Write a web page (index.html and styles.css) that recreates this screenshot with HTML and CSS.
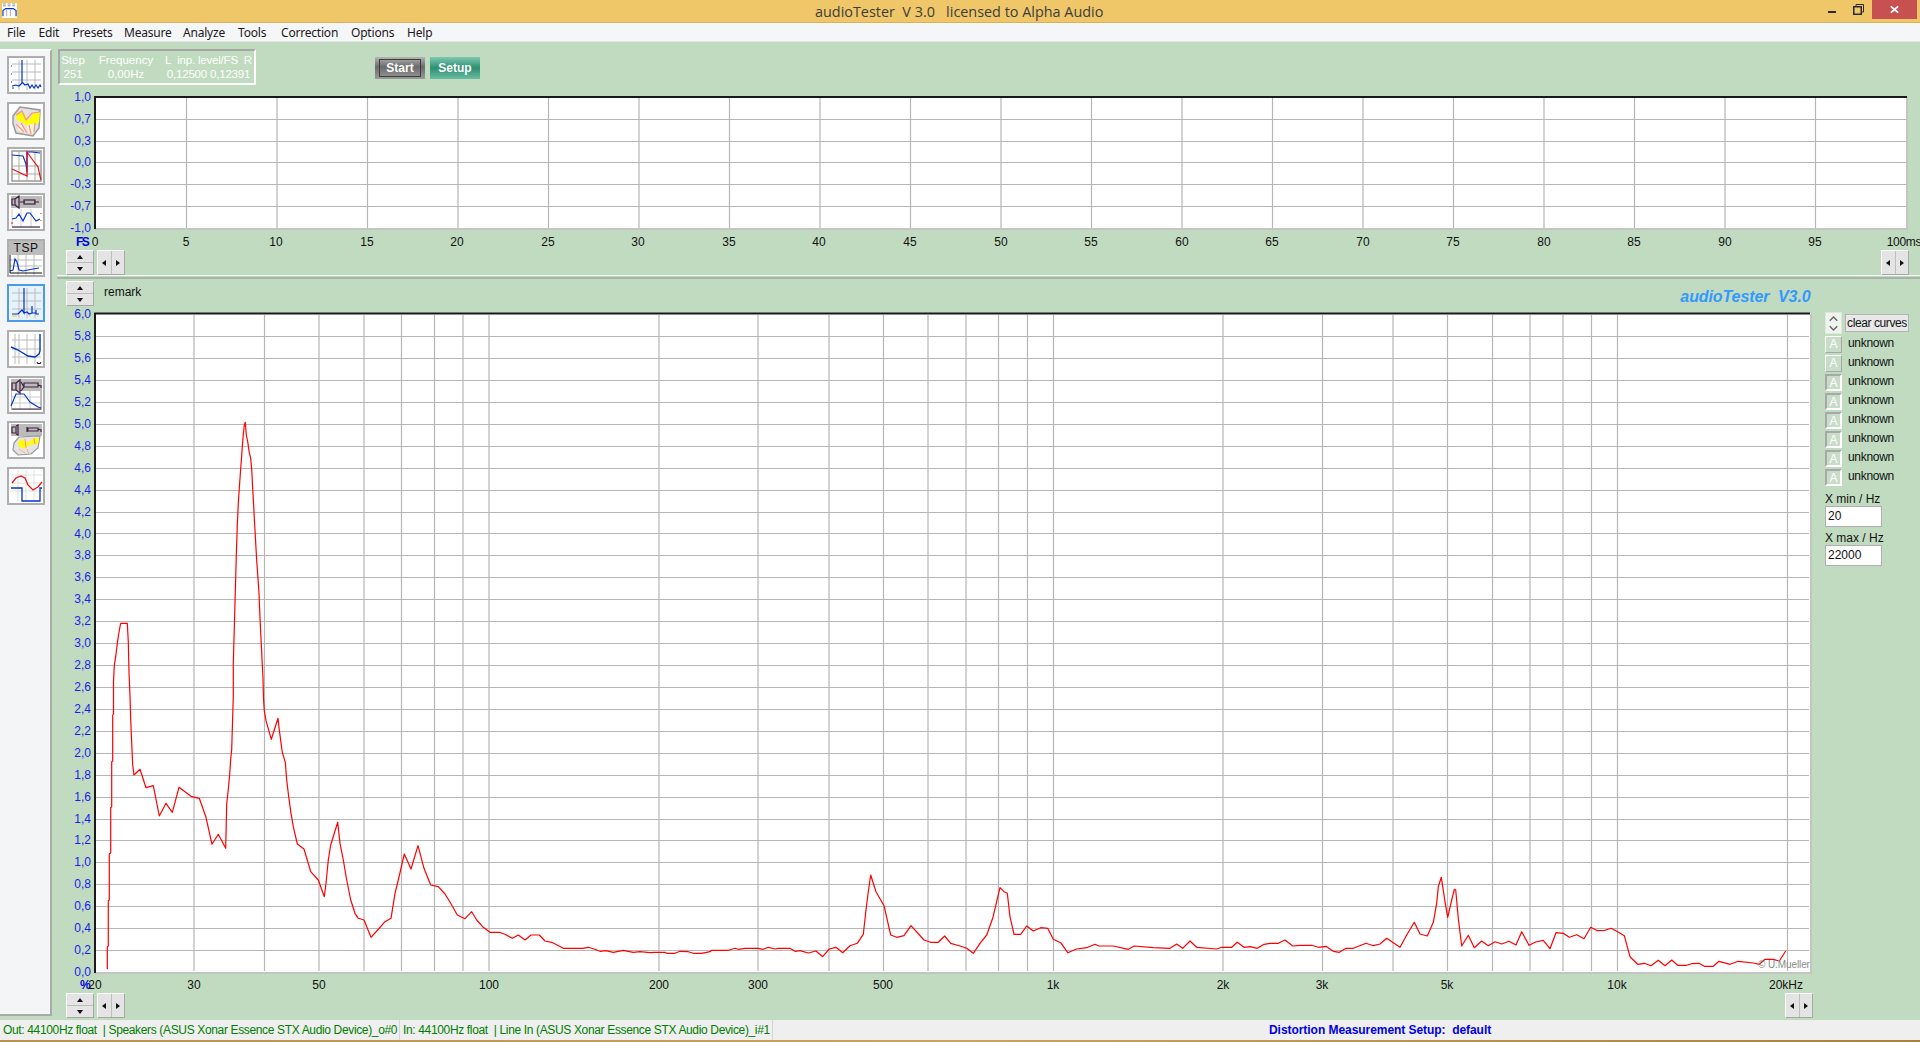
FILE: index.html
```html
<!DOCTYPE html>
<html lang="en">
<head>
<meta charset="utf-8">
<title>audioTester V 3.0</title>
<link rel="stylesheet" href="styles.css">
</head>
<body>
<div class="app">
  <header class="titlebar">
    <svg class="app-icon" viewBox="0 0 16 16"><rect width="16" height="16" fill="#fff"/><path d="M1 1h3M6 1h3M11 1h3M1 3h3M6 3h3M11 3h3" stroke="#889" stroke-width="1"/><path d="M1 14V8l3-2h8l3 2v6" fill="none" stroke="#03c" stroke-width="1.2"/><path d="M5 7v7M9 7v7" stroke="#aaa"/></svg>
    <div class="title">audioTester&nbsp; V 3.0 &nbsp; licensed to Alpha Audio</div>
    <div class="winctl">
      <svg class="ctl-min" viewBox="0 0 10 4"><rect y="1" width="8" height="2" fill="#2b2b2b"/></svg>
      <svg class="ctl-restore" viewBox="0 0 11 11"><path d="M3 2.500V.500H10.500V8H8.500" fill="none" stroke="#2b2b2b"/><rect x=".75" y="2.750" width="7.500" height="7.500" fill="none" stroke="#2b2b2b" stroke-width="1.500"/></svg>
      <div class="ctl-close"><svg viewBox="0 0 10 10"><path d="M1 1.500L9 8.500M9 1.500L1 8.500" stroke="#fff" stroke-width="2"/></svg></div>
    </div>
  </header>
  <nav class="menubar">
    <span class="m-file">File</span><span class="m-edit">Edit</span><span class="m-presets">Presets</span><span class="m-measure">Measure</span><span class="m-analyze">Analyze</span><span class="m-tools">Tools</span><span class="m-correction">Correction</span><span class="m-options">Options</span><span class="m-help">Help</span>
  </nav>
  <main class="workspace">
    <aside class="toolbar">
      <div class="tool"><svg viewBox="0 0 34 34"><path d="M3 6H32M3 14H32M3 22H32M10 2V32M18 2V32M26 2V32" stroke="#bbb"/><path d="M2 8h1M2 16h1M2 24h1M3 30h2" stroke="#03c"/><path d="M3 28l4-1 3 1 3-3V2v22l3 3 3-1 2 4 2-3 2 3 2-3 2 3 2-3 1 2" fill="none" stroke="#03c" stroke-width="1.200"/></svg></div>
      <div class="tool"><svg viewBox="0 0 34 34"><path d="M4 12L11 3l20 3-1 18-6 8-17-3-3-9z" fill="#e2e2e2" stroke="#999" stroke-width="1.500"/><path d="M7 11l6-4 4 5 3 4 4-7 7-1-1 11-7 2-4 1-5-3-6-3z" fill="#ff0"/><path d="M7 20l6 1 4 8-7-2zM18 21l7-2-1 11-5-1z" fill="#fff8c0"/><path d="M7 11l6-4 4 9M17 16l6-7 8-1M7 20l8 8M12 19l6 10M20 21l2 9M26 19l-1 9" fill="none" stroke="#f8a" stroke-width="1.200"/></svg></div>
      <div class="tool"><svg viewBox="0 0 34 34"><rect x="3" y="2" width="29" height="30" fill="none" stroke="#999" stroke-width="1.500"/><path d="M3 17H32M3 25H32M10 2V32M18 2V32M26 2V32" stroke="#aaa"/><path d="M3 6l11 1 3 8 1 8V3l5 0 8 1" fill="none" stroke="#03c" stroke-width="1.200"/><path d="M3 20l15 7V3l5 7 6 8 2 9 1 4" fill="none" stroke="#e11" stroke-width="1.200"/></svg></div>
      <div class="tool"><svg viewBox="0 0 34 34"><rect x="2" y="1" width="31" height="12" fill="#bbb"/><path d="M3 4h3v6H3zM6 4l4-3v12l-4-3M11 7h5M25 7h5" fill="none" stroke="#402040" stroke-width="1.200"/><rect x="15" y="5" width="11" height="4" fill="none" stroke="#402040" stroke-width="1.200"/><path d="M3 14V32M12 14V32M22 14V32" stroke="#ccc"/><path d="M3 24l4-1 3-4 4 7 4-8 3 0 6 8 4-2" fill="none" stroke="#03c" stroke-width="1.200"/><path d="M3 32H31" stroke="#402040" stroke-width="1.200"/><path d="M32 18v1M32 25v1M3 27v2" stroke="#e11"/></svg></div>
      <div class="tool tool-tsp"><span class="tsp-label">TSP</span><svg class="tsp-plot" viewBox="0 0 34 20"><path d="M1 5H33M1 11H33M9 0V20M17 0V20M25 0V20" stroke="#bbb"/><path d="M1 16l3-1 2-11 2 3 2 8 4 1 5-1 5-1 6-1" fill="none" stroke="#03c" stroke-width="1.200"/><path d="M1 0V18H33" fill="none" stroke="#111"/></svg></div>
      <div class="tool tool-active"><svg viewBox="0 0 34 34"><path d="M3 7H32M3 15H32M3 23H32M10 2V32M18 2V32M26 2V32" stroke="#bbb"/><path d="M3 28h6l4-4 2 3V2v25l3-1 2 2 3-1V20v7h4V24v4h3" fill="none" stroke="#03c" stroke-width="1.200"/><path d="M3 30h5M20 30h1M28 30h1" stroke="#fc0"/></svg></div>
      <div class="tool"><svg viewBox="0 0 34 34"><path d="M3 8H32M3 17H32M3 25H32M6 2V32M10 2V32M18 2V32M26 2V32" stroke="#bbb"/><path d="M2 15l7 3 10 6 7 1 4-3 1-3 0-17" fill="none" stroke="#03c" stroke-width="1.400"/><path d="M28 30l1 2 1-1 1 1 1-2" fill="none" stroke="#111"/></svg></div>
      <div class="tool"><svg viewBox="0 0 34 34"><rect x="2" y="1" width="31" height="31" fill="#bbb"/><rect x="3" y="13" width="28" height="18" fill="#fff"/><path d="M3 19H31M3 25H31M11 13V31M21 13V31" stroke="#ccc"/><path d="M3 5h4v7H3zM7 5l4-3v13l-4-3M12 4l3 5-3 4M15 5h14v4H15zM29 7l3 1v2" fill="none" stroke="#402040" stroke-width="1.200"/><path d="M2 28l5-12h8l6 8 8 5 3 1" fill="none" stroke="#03c" stroke-width="1.200"/><path d="M3 31H32" stroke="#402040"/></svg></div>
      <div class="tool"><svg viewBox="0 0 34 34"><rect x="2" y="1" width="31" height="12" fill="#bbb"/><path d="M3 4h4v6H3zM7 3l2-1v10l-2-1M19 5h10v3H19zM29 6l3 1v2M18 4v5" fill="none" stroke="#402040" stroke-width="1.200"/><path d="M5 20l5-6 21-1-2 12-7 6-13 1-5-5z" fill="#e4e4e4" stroke="#999" stroke-width="1.200"/><path d="M9 19l5-3 5 4 6-5 5 0-1 6-8 1-7 4-4-3z" fill="#ff0"/><path d="M16 16l1 9M25 15l1 6" stroke="#f8a"/><path d="M10 26l6 4M18 26l2 5" stroke="#fa9"/></svg></div>
      <div class="tool"><svg viewBox="0 0 34 34"><path d="M2 6H33M2 14H33M2 22H33M9 1V32M17 1V32M25 1V32" stroke="#e0e0e0"/><path d="M3 14l4-5 5-2 4 2 3 7 5 5 5-3 4-5" fill="none" stroke="#e11" stroke-width="1.300"/><path d="M2 19h11v13h18V19h2" fill="none" stroke="#03c" stroke-width="1.300"/></svg></div>
    </aside>
    <section class="content">
      <div class="top-head">
        <div class="levels">
          <div class="lv-col lv-step"><span>Step</span><span>251</span></div>
          <div class="lv-col lv-freq"><span>Frequency</span><span>0,00Hz</span></div>
          <div class="lv-col lv-level"><span>L&nbsp; inp. level/FS&nbsp; R</span><span>0,12500 0,12391</span></div>
        </div>
        <button class="cmd cmd-start"><span>Start</span></button>
        <button class="cmd cmd-setup"><span>Setup</span></button>
      </div>
      <svg class="chart-top" viewBox="52 90 1868 160">
        <rect x="95" y="97" width="1812" height="132" fill="#fff"/>
        <path class="grid" d="M96 119.500H1906M96 141.500H1906M96 162.500H1906M96 184.500H1906M96 206.500H1906M186.500 98V228M277 98V228M367.500 98V228M458 98V228M548.500 98V228M639 98V228M729.500 98V228M820 98V228M910.500 98V228M1001 98V228M1091.500 98V228M1182 98V228M1272.500 98V228M1363 98V228M1453.500 98V228M1544 98V228M1634.500 98V228M1725 98V228M1815.500 98V228"/>
        <path class="frame-light" d="M95 229H1907V97"/>
        <path class="frame-dark" d="M95 229V97H1907"/>
        <g class="ylab">
          <text x="91" y="101">1,0</text><text x="91" y="123">0,7</text><text x="91" y="145">0,3</text><text x="91" y="166">0,0</text><text x="91" y="188">-0,3</text><text x="91" y="210">-0,7</text><text x="91" y="232">-1,0</text>
        </g>
        <text class="unit" x="76" y="246">FS</text>
        <g class="xlab">
          <text x="95" y="246">0</text><text x="186" y="246">5</text><text x="276" y="246">10</text><text x="367" y="246">15</text><text x="457" y="246">20</text><text x="548" y="246">25</text><text x="638" y="246">30</text><text x="729" y="246">35</text><text x="819" y="246">40</text><text x="910" y="246">45</text><text x="1001" y="246">50</text><text x="1091" y="246">55</text><text x="1182" y="246">60</text><text x="1272" y="246">65</text><text x="1363" y="246">70</text><text x="1453" y="246">75</text><text x="1544" y="246">80</text><text x="1634" y="246">85</text><text x="1725" y="246">90</text><text x="1815" y="246">95</text><text class="xlab-end" x="1904" y="246">100ms</text>
        </g>
      </svg>
      <div class="top-controls">
        <div class="spin spin-v"><b class="tri-up"></b><b class="tri-down"></b></div>
        <div class="spin spin-h"><b class="tri-left"></b><b class="tri-right"></b></div>
        <div class="spin spin-h spin-end"><b class="tri-left"></b><b class="tri-right"></b></div>
      </div>
      <div class="divider"></div>
      <div class="remark-row">
        <div class="spin spin-v"><b class="tri-up"></b><b class="tri-down"></b></div>
        <span class="remark">remark</span>
        <span class="brand">audioTester&nbsp; V3.0</span>
      </div>
      <div class="main-row">
        <svg class="chart-main" viewBox="52 307 1772 685">
          <rect x="95" y="313" width="1716" height="660" fill="#fff"/>
          <path class="grid" d="M96 336.500H1809M96 358.500H1809M96 380.500H1809M96 402.500H1809M96 424.500H1809M96 446.500H1809M96 468.500H1809M96 490.500H1809M96 512.500H1809M96 533.500H1809M96 555.500H1809M96 577.500H1809M96 599.500H1809M96 621.500H1809M96 643.500H1809M96 665.500H1809M96 687.500H1809M96 709.500H1809M96 731.500H1809M96 753.500H1809M96 775.500H1809M96 797.500H1809M96 819.500H1809M96 840.500H1809M96 862.500H1809M96 884.500H1809M96 906.500H1809M96 928.500H1809M96 950.500H1809"/>
          <path class="grid" d="M194 315V971M264.500 315V971M319 315V971M364 315V971M401.500 315V971M434.500 315V971M463 315V971M489 315V971M659 315V971M758 315V971M829 315V971M883.500 315V971M928 315V971M966 315V971M998.500 315V971M1027.500 315V971M1053.500 315V971M1223 315V971M1322.500 315V971M1393 315V971M1447.500 315V971M1492.500 315V971M1530 315V971M1563 315V971M1591.500 315V971M1617.500 315V971M1787.500 315V971"/>
          <path class="frame-light" d="M95 973H1811V314"/>
          <path class="frame-dark" d="M95 973V313.500H1810"/>
          <polyline class="curve" points="107.300,969.300 107.300,946.700 108.300,946 108.300,900.700 109.300,900 109.300,854 110.700,853 110.700,807.700 111.700,807 111.700,761.700 112.700,761 112.700,715 113.500,714 113.500,681.700 114.300,665.700 115.700,656.700 116.700,648.300 117.700,640.700 118.700,634 120,626.700 120.700,623.300 127.300,623.300 128.300,642 129,671.700 130,695.700 130.700,719 131.700,742.700 132.700,765 134,775 140,769.300 146,787.700 153.300,785.700 159.300,816 166,803.300 172.300,812.300 179,787.300 191.700,796.700 199.300,798.300 206,817.300 212,844.300 218.300,834.300 225.700,848.300 226.700,804 228.300,789.300 229.700,774.300 230.700,759.300 231.700,749.300 232.700,716 233.300,696.700 233.300,663.300 234.300,628.300 235.300,591.700 236.300,555.700 237.300,525 238.300,503.300 239.300,488.300 240.300,474 241.300,461 242.300,446.700 243.300,434.300 244.300,425 245.300,422.300 246.300,435 247.700,441.700 249.300,452.700 250.700,458.300 251.700,469.300 252.700,488.300 253.700,506.700 254.700,525 255.700,542.700 256.700,560.700 257.700,574.300 259,593.300 260,618.300 261,638.300 262,658.700 263,678.700 263.500,698.500 264.300,710.700 266,720.700 271.300,739.300 278,718.300 279.300,730 282.300,752.300 285.300,762.300 286.700,780 288.700,796.700 291,813.300 293.300,826.700 297.300,844 304,849 310.700,871.700 318.300,880 324.300,896.700 326,883.300 328.300,860 330.700,845 337.700,822.300 340,843.300 343.300,860 346.700,880 350.700,900 355,913.300 358.300,918.300 364,920 371,937.300 377.700,930 385,921.700 391,918.300 395,893.300 398.300,880 404.300,854 411,869 418,845.700 424,868.300 430.700,885 438.300,886.700 445,894 450.700,903.300 457.300,915 465,918.700 471.700,911.700 476.700,920 483.300,927.300 490,932.300 499.300,932.300 505,934.300 512.300,938.300 518.300,935 525,940 531,935 539.300,935 545,941 551.700,942.300 563.300,948.300 582.700,948.300 588.300,947.300 594,949 600,951.300 605.700,950.700 613.300,952.300 623.300,950.300 633.300,952.300 640,951.700 650,952.700 655,952.300 665,952.300 666.700,953.300 675,953.300 680,951.300 688.300,951.700 693.300,953.300 701.700,953.300 710,951.700 711.700,950.300 728.300,950.300 735,948.300 738.300,949.300 745,948.300 758.300,948.300 763.300,949.300 768.300,947.300 775,949 778.300,948.300 790,948.300 795,951.300 800,950.700 808.300,953 816,951 822.700,956.700 829.300,949 836,947.300 842.700,952.700 850,945.700 857.300,943.300 863.300,934.300 866,910 868.300,891.700 870.700,875 876,891.700 884,905.700 890.700,935 896.700,937.300 904,935.700 911,925.700 924,940 930.700,942.300 938.300,942.300 944.700,936 950.700,943.300 960,946 966.700,948.300 973.300,953.300 980,943.300 986.700,935 992.700,918.300 996.700,901.700 1000,887.700 1004,891.700 1007.300,893.300 1010,916.700 1014,934.300 1020.700,934.300 1026.700,926 1033.300,931 1040.700,927.700 1047.700,928.300 1053.300,939.300 1060.700,942.700 1067.700,952.700 1076.700,949 1086.700,947.700 1095,944.300 1099,946 1113.300,946 1128.300,949.300 1134.300,946 1153.300,947.700 1170,948.300 1176.700,944 1182.700,948.300 1190,941 1196.700,947.300 1216.700,949 1221.700,947.300 1231.700,947.300 1237.300,942.300 1244,947.300 1250,946.700 1257.300,948.300 1264,944.300 1270,943.300 1278.300,943.300 1285,940 1292.700,946 1300,945.300 1311.700,945.300 1318.300,947.300 1326,946.300 1333.300,951.300 1339.300,952.300 1346,948.300 1353.300,948.300 1366,943.300 1373.300,945.700 1380,944 1386.700,938.300 1400,947.300 1406.700,935 1414.300,922.300 1420,934 1427.300,936 1433.300,922.300 1436.700,903.300 1438.300,886.700 1441.300,877.300 1445,901.700 1447.700,917.300 1451.700,900 1454.300,889.300 1455.700,890 1458.300,918.300 1461.700,946 1468.300,935.300 1474.300,947.700 1481.700,941 1488.300,945.700 1495,941.700 1501.700,944 1509,941.300 1516,945 1521.700,931.700 1529,945.300 1535.700,942 1543.300,940.300 1550,948.700 1556,932.700 1563.300,933.300 1569.300,937.300 1576.700,934.700 1584,938.700 1590.700,927.300 1597.300,930.700 1605,930.300 1611,928.300 1617.700,931.700 1624.300,935.700 1630,956.700 1637.700,964.300 1644.300,963.300 1651,965.700 1658.300,960.300 1665,965.700 1671.700,960 1677.700,965.300 1686.700,965.300 1691.700,963.700 1699,963.300 1704.300,966.300 1713.300,966.300 1719,961.300 1730,964.300 1738.300,961.300 1753.300,963 1759.300,964.300 1765,959.300 1773.300,959.300 1779.300,961 1785.700,951"/>
          <text class="copyright" x="1758" y="968">© U.Mueller</text>
          <g class="ylab">
            <text x="91" y="318">6,0</text><text x="91" y="340">5,8</text><text x="91" y="362">5,6</text><text x="91" y="384">5,4</text><text x="91" y="406">5,2</text><text x="91" y="428">5,0</text><text x="91" y="450">4,8</text><text x="91" y="472">4,6</text><text x="91" y="494">4,4</text><text x="91" y="516">4,2</text><text x="91" y="538">4,0</text><text x="91" y="559">3,8</text><text x="91" y="581">3,6</text><text x="91" y="603">3,4</text><text x="91" y="625">3,2</text><text x="91" y="647">3,0</text><text x="91" y="669">2,8</text><text x="91" y="691">2,6</text><text x="91" y="713">2,4</text><text x="91" y="735">2,2</text><text x="91" y="757">2,0</text><text x="91" y="779">1,8</text><text x="91" y="801">1,6</text><text x="91" y="823">1,4</text><text x="91" y="844">1,2</text><text x="91" y="866">1,0</text><text x="91" y="888">0,8</text><text x="91" y="910">0,6</text><text x="91" y="932">0,4</text><text x="91" y="954">0,2</text><text x="91" y="976">0,0</text>
          </g>
          <text class="unit" x="80" y="989">%</text>
          <g class="xlab">
            <text x="95" y="989">20</text><text x="194" y="989">30</text><text x="319" y="989">50</text><text x="489" y="989">100</text><text x="659" y="989">200</text><text x="758" y="989">300</text><text x="883" y="989">500</text><text x="1053" y="989">1k</text><text x="1223" y="989">2k</text><text x="1322" y="989">3k</text><text x="1447" y="989">5k</text><text x="1617" y="989">10k</text><text x="1786" y="989">20kHz</text>
          </g>
        </svg>
        <aside class="sidepanel">
          <div class="clear-row">
            <div class="updown"><svg viewBox="0 0 16 21"><path d="M4 8l4-4 4 4M4 14l4 4 4-4" fill="none" stroke="#666" stroke-width="1.500"/></svg></div>
            <button class="clear-btn">clear curves</button>
          </div>
          <ul class="curve-list">
            <li><span class="chk chk-up">A</span>unknown</li>
            <li><span class="chk chk-up">A</span>unknown</li>
            <li><span class="chk">A</span>unknown</li>
            <li><span class="chk">A</span>unknown</li>
            <li><span class="chk">A</span>unknown</li>
            <li><span class="chk">A</span>unknown</li>
            <li><span class="chk">A</span>unknown</li>
            <li><span class="chk">A</span>unknown</li>
          </ul>
          <label class="field-label">X min / Hz</label>
          <div class="field">20</div>
          <label class="field-label">X max / Hz</label>
          <div class="field">22000</div>
        </aside>
      </div>
      <div class="bottom-controls">
        <div class="spin spin-v"><b class="tri-up"></b><b class="tri-down"></b></div>
        <div class="spin spin-h"><b class="tri-left"></b><b class="tri-right"></b></div>
        <div class="spin spin-h spin-end"><b class="tri-left"></b><b class="tri-right"></b></div>
      </div>
    </section>
  </main>
  <footer class="statusbar">
    <span class="st st-out">Out: 44100Hz float&nbsp; | Speakers (ASUS Xonar Essence STX Audio Device)_o#0</span>
    <span class="st st-in">In: 44100Hz float&nbsp; | Line In (ASUS Xonar Essence STX Audio Device)_i#1</span>
    <span class="st st-setup">Distortion Measurement Setup:&nbsp; default</span>
  </footer>
  <div class="desktop-sliver"></div>
</div>
</body>
</html>
```

FILE: styles.css
```css
* { box-sizing: border-box; }
html, body { margin: 0; padding: 0; }
body { width: 1920px; height: 1042px; overflow: hidden; background: #c0dbc0; font-family: "Liberation Sans", Arial, sans-serif; font-size: 12px; color: #111; }
.app { display: flex; flex-direction: column; width: 1920px; height: 1042px; }

.titlebar { flex: none; height: 23px; background: #efc768; border-bottom: 1px solid #d8b25a; display: flex; align-items: flex-start; }
.app-icon { width: 15px; height: 15px; margin: 3px 0 0 2px; flex: none; }
.title { margin-left: 798px; width: 500px; font-family: "Open Sans", sans-serif; font-size: 14.400px; line-height: 23px; color: #3c3c3c; white-space: nowrap; }
.winctl { margin-left: auto; display: flex; align-items: flex-start; }
.ctl-min { width: 10px; height: 4px; margin: 10px 15px 0 0; }
.ctl-restore { width: 11px; height: 11px; margin: 4px 8px 0 0; }
.ctl-close { width: 45px; height: 19px; margin-right: 3px; background: #c75050; display: flex; align-items: center; justify-content: center; }
.ctl-close svg { width: 9px; height: 9px; }

.menubar { flex: none; height: 19px; background: #f5f6f8; border-bottom: 1px solid #e4e6e8; display: flex; align-items: center; font-family: "Noto Sans", sans-serif; font-size: 12px; letter-spacing: -.2px; color: #1a1a1a; padding-left: 7px; }
.menubar span { display: block; white-space: nowrap; }
.m-file { width: 31.500px; }
.m-edit { width: 34px; }
.m-presets { width: 51.500px; }
.m-measure { width: 59px; }
.m-analyze { width: 55px; }
.m-tools { width: 43px; }
.m-correction { width: 70px; }
.m-options { width: 56px; }

.workspace { flex: none; height: 978px; display: flex; background: #c0dbc0; }

.toolbar { flex: none; width: 52px; height: 967px; margin-top: 7px; background: #f4f5f7; border-right: 2px solid #a9aaa9; border-top: 2px solid #fff; border-bottom: 2px solid #a9aaa9; padding: 5px 0 0 7px; display: flex; flex-direction: column; gap: 7.670px; }
.tool { width: 38px; height: 38px; border: 2px solid #aeaeae; background: #fff; flex: none; display: flex; flex-direction: column; }
.tool svg { width: 34px; height: 34px; display: block; }
.tool-active { border-color: #4a9ae8; background: #e6f2fc; }
.tsp-label { display: block; height: 14px; background: #bdbdbd; text-align: center; font-size: 12px; line-height: 14px; color: #111; letter-spacing: .5px; }
.tool .tsp-plot { width: 34px; height: 20px; }

.content { flex: 1; min-width: 0; display: flex; flex-direction: column; }
.top-head { flex: none; height: 48px; padding: 7px 0 0 6px; display: flex; align-items: flex-start; }
.levels { width: 198px; height: 36px; border: 2px solid; border-color: #a6a6a6 #fff #fff #a6a6a6; display: flex; color: #fff; font-size: 11.500px; line-height: 14px; padding-top: 2px; }
.lv-col { display: flex; flex-direction: column; align-items: center; white-space: nowrap; }
.lv-step { width: 24px; padding-left: 2px; }
.lv-freq { width: 52px; margin-left: 16px; }
.lv-level { width: 85px; margin-left: 14px; letter-spacing: -.2px; }
.cmd { height: 22px; width: 50px; border: 0; padding: 2px 4px; font: bold 12px "Liberation Sans", sans-serif; color: #fff; margin-top: 8px; display: block; }
.cmd span { display: block; height: 18px; line-height: 16px; border: 1px solid transparent; }
.cmd-start { margin-left: 119px; background: linear-gradient(#b5b5b5, #6a6a6a 45%, #9a9a9a); }
.cmd-start span { border: 1px solid #3e3e3e; }
.cmd-setup { margin-left: 5px; background: linear-gradient(#7ccab0, #2e8e70 50%, #6bbda2); }

.chart-top { flex: none; display: block; width: 1868px; height: 160px; }
.grid { stroke: #b6b6b6; stroke-width: 1.200; fill: none; }
.frame-light { fill: none; stroke: #c4c4c4; stroke-width: 2; }
.frame-dark { fill: none; stroke: #1a1a1a; stroke-width: 2; }
.ylab text { text-anchor: end; font-size: 12px; fill: #1c1cf0; }
.xlab text { text-anchor: middle; font-size: 12px; fill: #111; }
.xlab .xlab-end { letter-spacing: -.3px; }
.unit { font-size: 12px; font-weight: bold; letter-spacing: -1.500px; fill: #0000e0; }
.curve { fill: none; stroke: #f00; stroke-width: 1.200; stroke-linejoin: round; }
.copyright { font-size: 10px; letter-spacing: -.1px; fill: #8a8a8a; }

.top-controls, .bottom-controls { flex: none; display: flex; align-items: flex-start; padding-left: 14px; gap: 3px; }
.top-controls { height: 25px; }
.spin-end { margin-left: auto; }
.top-controls .spin-end { margin-right: 11px; }
.bottom-controls { height: 28px; padding-top: 1px; }
.bottom-controls .spin-end { margin-right: 107px; }

.spin { display: flex; background: #bdbdbd; border: 1px solid; border-color: #fff #a8a8a8 #a8a8a8 #fff; flex: none; }
.spin b { display: flex; align-items: center; justify-content: center; background: #e4e4e4; }
.spin b::after { content: ""; display: block; width: 0; height: 0; border-style: solid; border-color: transparent; }
.spin-v { flex-direction: column; width: 28px; height: 25px; gap: 1px; }
.spin-v b { flex: 1; }
.spin-h { width: 28px; height: 25px; gap: 1px; }
.spin-h b { flex: 1; }
.tri-up::after { border-width: 0 3px 4px; border-bottom-color: #111 !important; }
.tri-down::after { border-width: 4px 3px 0; border-top-color: #111 !important; }
.tri-left::after { border-width: 3.500px 4px 3.500px 0; border-right-color: #111 !important; }
.tri-right::after { border-width: 3.500px 0 3.500px 4px; border-left-color: #111 !important; }

.divider { flex: none; height: 4px; border-top: 1px solid #f0f6f0; border-bottom: 2px solid #a9b3a9; margin-left: 5px; }
.remark-row { flex: none; height: 28px; display: flex; align-items: flex-start; padding: 2px 0 0 14px; }
.remark { margin: 4px 0 0 10px; font-size: 12px; }
.brand { margin: 7px 0 0 1539px; width: 140px; font-size: 16px; font-weight: bold; font-style: italic; letter-spacing: -.1px; color: #3399ff; white-space: nowrap; }

.main-row { flex: none; height: 685px; display: flex; }
.chart-main { flex: none; display: block; width: 1772px; height: 685px; }
.sidepanel { flex: none; width: 96px; padding: 5px 0 0 1px; font-size: 12px; }
.clear-row { display: flex; align-items: flex-start; height: 24px; }
.updown { width: 17px; height: 22px; background: #eef3ee; border: 1px solid #dfe8df; flex: none; }
.updown svg { display: block; width: 15px; height: 20px; }
.clear-btn { margin: 2px 0 0 3px; width: 64px; height: 18px; padding: 0; background: #e8e8e8; border: 1px solid #b4b4b4; font: 12px "Liberation Sans", sans-serif; letter-spacing: -.4px; color: #111; white-space: nowrap; }
.curve-list { list-style: none; margin: 0 0 2px; padding: 0; }
.curve-list li { display: flex; align-items: flex-start; height: 19px; line-height: 15px; white-space: nowrap; letter-spacing: -.3px; }
.chk { width: 17px; height: 17px; margin-right: 6px; flex: none; border: 2px solid; border-color: #a8a8a8 #fff #fff #a8a8a8; color: #fff; text-align: center; font-size: 12px; line-height: 14px; letter-spacing: 0; background: #c8dcc8; }
.chk-up { border: 1px solid; border-color: #fff #a8a8a8 #a8a8a8 #fff; line-height: 15px; }
.field-label { display: block; margin-top: 3px; height: 15px; line-height: 17px; }
.field { width: 57px; height: 21px; background: #fff; border: 1px solid #b0b0b0; padding-left: 2px; line-height: 19px; font-size: 12px; }

.statusbar { flex: none; height: 20px; background: #efefef; display: flex; align-items: center; font-size: 12px; white-space: nowrap; }
.st { display: block; line-height: 21px; letter-spacing: -.35px; }
.st-out { width: 400px; padding-left: 3px; color: #008000; border-right: 1px solid #d6d6d6; }
.st-in { width: 373px; padding-left: 3px; color: #008000; border-right: 1px solid #d6d6d6; }
.st-setup { margin-left: 496px; color: #0000e6; font-weight: bold; letter-spacing: -.05px; }
.desktop-sliver { flex: none; height: 2px; background: linear-gradient(90deg, #b9924e, #c8a45e 50%, #a9813f); }
```
